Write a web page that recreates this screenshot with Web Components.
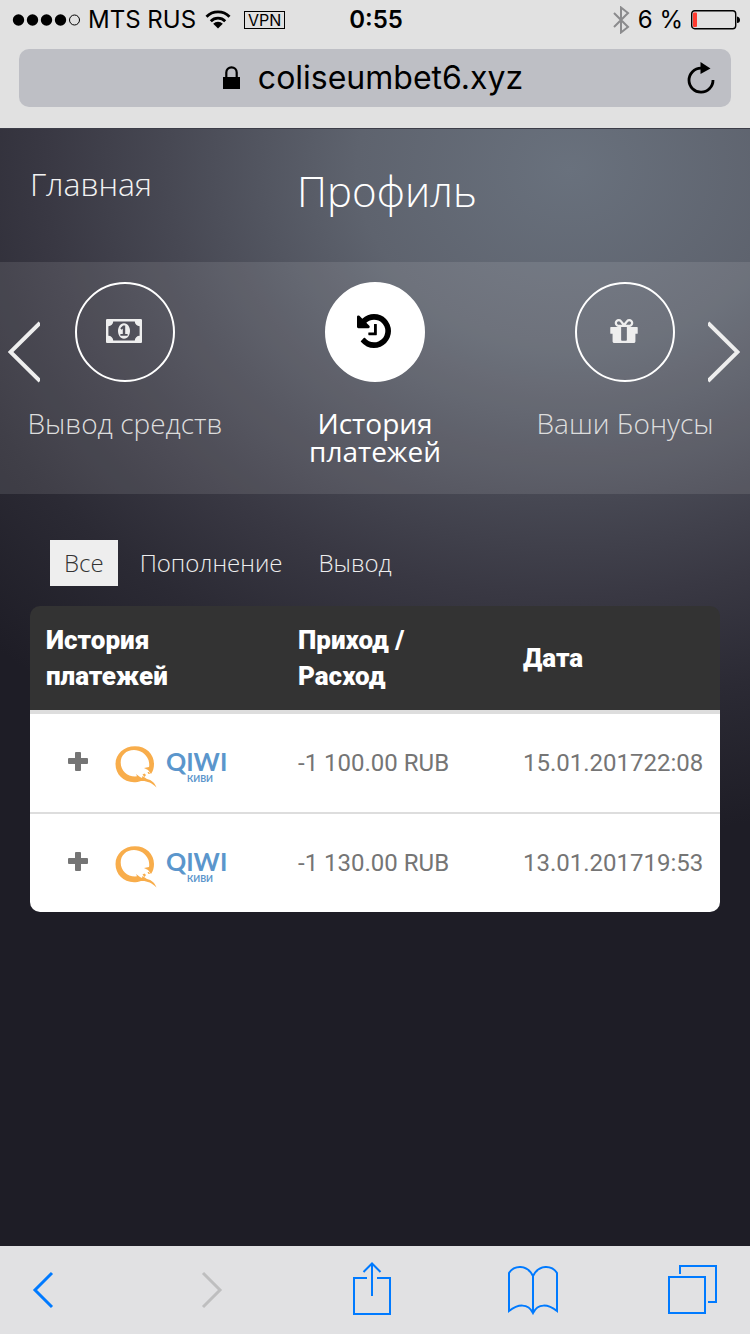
<!DOCTYPE html>
<html lang="ru">
<head>
<meta charset="utf-8">
<meta name="viewport" content="width=device-width, initial-scale=1">
<title>Профиль</title>
<style>
html { height: 100%; }
body { margin: 0; min-height: 100%; display: flex; flex-direction: column; font-family: "Open Sans", sans-serif; background: #1e1d26; }
profile-page { flex: 1; }
</style>
</head>
<body>
<browser-bar></browser-bar>
<profile-page>
  <page-header slot="header"></page-header>
  <section-carousel slot="sections">
    <section-item icon="money">Вывод средств</section-item>
    <section-item icon="history" active>История платежей</section-item>
    <section-item icon="gift">Ваши Бонусы</section-item>
  </section-carousel>
  <filter-tabs></filter-tabs>
  <payment-table></payment-table>
</profile-page>
<browser-toolbar></browser-toolbar>

<script>
function define(name, html) {
  const template = document.createElement('template');
  template.innerHTML = html;
  customElements.define(name, class extends HTMLElement {
    constructor() {
      super();
      this.attachShadow({ mode: 'open' }).append(template.content.cloneNode(true));
    }
  });
}

define('status-bar', `
<style>
:host { display: grid; grid-template-columns: 1fr auto 1fr; align-items: center; height: 40px; padding: 0 10px 0 12px; font: 24px/40px Inter, sans-serif; color: #000; }
div { display: flex; align-items: center; gap: 8px; }
.right { justify-content: flex-end; }
b { font-weight: 600; }
.vpn { border: 1px solid #000; font-size: 16px; line-height: 16px; padding: 0 3px; margin-left: 4px; }
svg { display: block; flex: none; }
</style>
<div>
  <svg width="68" height="12" viewBox="0 0 68 12"><circle cx="6.500" cy="6" r="5.700"/><circle cx="20.500" cy="6" r="5.700"/><circle cx="34.500" cy="6" r="5.700"/><circle cx="48.500" cy="6" r="5.700"/><circle cx="62.500" cy="6" r="5" fill="none" stroke="#000"/></svg>
  <span>MTS RUS</span>
  <svg width="28" height="20" viewBox="0 0 28 20"><g fill="none" stroke="#000" stroke-width="2.800"><path d="M2.500 6.800a16 16 0 0 1 23 0"/><path d="M6.800 11.200a10 10 0 0 1 14.400 0"/></g><path d="M14 18.500l-4.800-4.700a6.800 6.800 0 0 1 9.600 0z"/></svg>
  <span class="vpn">VPN</span>
</div>
<b>0:55</b>
<div class="right">
  <svg width="18" height="28" viewBox="0 0 18 28" fill="none" stroke="#8b8b8d" stroke-width="2"><path d="M2 7l14 14-7 5.500V1.500L16 7 2 21"/></svg>
  <span>6 %</span>
  <svg width="49" height="20" viewBox="0 0 49 20"><rect x=".700" y=".700" width="44" height="18" rx="3" fill="none" stroke="#000" stroke-width="1.400"/><rect x="2" y="2.500" width="4" height="14.500" rx="1" fill="#ff3b30"/><path d="M46 6.500q3 .500 3 3.500t-3 3z"/></svg>
</div>`);

define('browser-bar', `
<style>
:host { display: block; background: #e1e1e1; padding-bottom: 21px; }
.field { display: flex; align-items: center; margin: 9px 19px 0; height: 58px; border-radius: 10px; background: #bebfc5; }
button { border: 0; background: none; padding: 0; color: #000; display: flex; align-items: center; justify-content: center; }
.address { flex: 1; gap: 18px; padding-left: 56px; font: 32px/58px Inter, sans-serif; height: 58px; }
.reload { width: 60px; height: 58px; }
</style>
<status-bar></status-bar>
<div class="field">
  <button class="address"><svg width="17" height="24" viewBox="0 0 17 24"><path d="M3.300 12V6.500a5.200 5.200 0 0 1 10.400 0V12" fill="none" stroke="#000" stroke-width="2.200"/><path d="M0 11h17v12H0z"/></svg>coliseumbet6.xyz</button>
  <button class="reload" aria-label="Обновить"><svg width="28" height="32" viewBox="0 0 28 32"><path d="M26 18A12 12 0 1 1 14 6.200" fill="none" stroke="#000" stroke-width="2.800"/><path d="M13.500 0l10 6.500-10 5.500z"/></svg></button>
</div>`);

define('profile-page', `
<style>
:host { display: flex; flex-direction: column; box-sizing: border-box; border-top: 1px solid #3c3d48;
  background: radial-gradient(ellipse 760px 620px at 76% 40px, #69717d 0%, #5e636e 28%, #474853 53%, #393843 69%, #2b2a34 86%, #1e1d26 108%); color: #fff; }
main { display: flex; flex-direction: column; gap: 20px; padding: 46px 30px 30px; }
</style>
<slot name="header"></slot>
<slot name="sections"></slot>
<main><slot></slot></main>`);

define('page-header', `
<style>
:host { display: block; }
header { display: grid; grid-template-columns: 1fr auto 1fr; align-items: start; height: 133px; padding: 0 6px 0 30px; }
a { color: #f2f2f2; text-decoration: none; font-weight: 300; font-size: 32px; line-height: 110px; }
h1 { margin: 0; font-weight: 300; font-size: 42px; line-height: 124px; }
</style>
<header><a href="#home">Главная</a><h1>Профиль</h1></header>`);

define('section-carousel', `
<style>
:host { display: block; position: relative; background: rgba(255,255,255,.1); }
nav { display: grid; grid-template-columns: repeat(3, 1fr); min-height: 212px; padding-top: 20px; }
button { position: absolute; top: 59px; width: 32px; height: 62px; padding: 0; border: 0; background: none; }
.prev { left: 8px; }
.next { right: 10px; }
svg { display: block; fill: none; stroke: #eee; stroke-width: 4; }
</style>
<nav><slot></slot></nav>
<button class="prev" aria-label="Назад"><svg width="32" height="62" viewBox="0 0 32 62"><path d="M32 2L2.500 31 32 60"/></svg></button>
<button class="next" aria-label="Вперёд"><svg width="32" height="62" viewBox="0 0 32 62"><path d="M0 2l29.500 29L0 60"/></svg></button>`);

const icons = {
  money: ['0 256 1920 1280', 36, 24, 'M768 1152h384v-96h-128v-448h-114l-148 137 77 80q42-37 55-57h2v288h-128v96zm512-256q0 70-21 142t-59.5 134-101.5 101-138 39-138-39-101.5-101-59.5-134-21-142 21-142 59.5-134 101.5-101 138-39 138 39 101.5 101 59.5 134 21 142zm512 256v-512q-106 0-181-75t-75-181h-1152q0 106-75 181t-181 75v512q106 0 181 75t75 181h1152q0-106 75-181t181-75zm128-832v1152q0 26-19 45t-45 19h-1792q-26 0-45-19t-19-45v-1152q0-26 19-45t45-19h1792q26 0 45 19t19 45z'],
  history: ['0 128 1536 1536', 34, 34, 'M1536 896q0 156-61 298t-164 245-245 164-298 61q-172 0-327-72.5t-264-204.5q-7-10-6.500-22.500t8.500-20.500l137-138q10-9 25-9 16 2 23 12 73 95 179 147t225 52q104 0 198.500-40.500t163.500-109.500 109.500-163.500 40.500-198.500-40.500-198.500-109.500-163.500-163.500-109.500-198.500-40.500q-98 0-188 35.500t-160 101.500l137 138q31 30 14 69-17 40-59 40h-448q-26 0-45-19t-19-45v-448q0-42 40-59 39-17 69 14l130 129q107-101 244.500-156.500t284.500-55.500q156 0 298 61t245 164 164 245 61 298zm-640-288v448q0 14-9 23t-23 9h-320q-14 0-23-9t-9-23v-64q0-14 9-23t23-9h224v-352q0-14 9-23t23-9h64q14 0 23 9t9 23z'],
  gift: ['0 192 1536 1344', 28, 24, 'M928 1356v-56-468-192h-320v192 468 56q0 25 18 38.500t46 13.500h192q28 0 46-13.500t18-38.500zm-456-844h195l-126-161q-26-31-69-31-40 0-68 28t-28 68 28 68 68 28zm688-96q0-40-28-68t-68-28q-43 0-69 31l-125 161h194q40 0 68-28t28-68zm376 256v320q0 14-9 23t-23 9h-96v416q0 40-28 68t-68 28h-1088q-40 0-68-28t-28-68v-416h-96q-14 0-23-9t-9-23v-320q0-14 9-23t23-9h440q-93 0-158.500-65.500t-65.500-158.500 65.500-158.500 158.500-65.500q107 0 168 77l128 165 128-165q61-77 168-77 93 0 158.500 65.500t65.500 158.500-65.500 158.500-158.500 65.500h440q14 0 23 9t9 23z']
};

customElements.define('section-item', class extends HTMLElement {
  connectedCallback() {
    const [box, w, h, d] = icons[this.getAttribute('icon')];
    this.attachShadow({ mode: 'open' }).innerHTML = `
<style>
:host { display: block; }
a { display: flex; flex-direction: column; align-items: center; gap: 27px; color: #ddd; text-decoration: none; font-weight: 300; font-size: 28px; line-height: 28px; text-align: center; }
.disc { box-sizing: border-box; width: 100px; height: 100px; border: 2px solid #fff; border-radius: 50%; display: flex; align-items: center; justify-content: center; padding: 0 2px 2px 0; }
.label { max-width: 220px; }
svg { display: block; fill: #eee; }
:host([active]) a { color: #fff; font-weight: 400; }
:host([active]) .disc { background: #fff; }
:host([active]) .label { max-width: 180px; }
:host([active]) svg { fill: #000; }
</style>
<a href="#${this.getAttribute('icon')}"><span class="disc"><svg width="${w}" height="${h}" viewBox="${box}"><path d="${d}"/></svg></span><span class="label"><slot></slot></span></a>`;
  }
});

define('filter-tabs', `
<style>
:host { display: block; }
div { display: flex; gap: 8px; padding: 0 20px; }
button { border: 0; margin: 0; padding: 0 14px; height: 46px; background: none; color: #eee; font: 300 24px/46px "Open Sans", sans-serif; }
[aria-pressed=true] { background: #eee; color: #333; }
</style>
<div><button aria-pressed="true">Все</button><button aria-pressed="false">Пополнение</button><button aria-pressed="false">Вывод</button></div>`);

define('qiwi-logo', `
<style>
:host { display: block; }
svg { display: block; }
text { fill: #5b96cc; font-family: Lato, sans-serif; font-weight: 700; }
</style>
<svg width="120" height="52" viewBox="0 -8 120 52" role="img" aria-label="QIWI">
<path fill="#f8ad4b" fill-rule="evenodd" d="M20 1.300C31 1.300 39 9 39 19C39 23 38 26 36 29L33 25L29 23L34 22C34.500 20 34.200 18 33.500 15C31 8.500 25 5 19 5C11 5 5.700 10.500 5.700 17.500C5.700 25.500 12 31.500 20 31.500L22 31.200L21 29L25 32L27 33L27.500 31L32 34C36.500 35 40 38 41.500 42.500C37 37.500 31 35.500 26 36C24 37 21 37.200 19 37.200C8 37.200 .500 29 .500 19C.500 9 9 1.300 20 1.300z"/>
<path fill="#f8ad4b" d="M27.500 29.500l2-1 1.500 1.500-1.500 2zM32.500 27l1.500 0 1 2-1.500 0z"/>
<text x="51" y="26" font-size="25">QIWI</text>
<text x="72" y="37" font-size="9">КИВИ</text>
</svg>`);

define('payment-table', `
<style>
:host { display: block; border-radius: 10px; overflow: hidden; }
table { width: 100%; border-collapse: separate; border-spacing: 0; table-layout: fixed; font: 24px/36px Roboto, sans-serif; color: #757575; }
col:nth-child(2) { width: 225px; }
col:nth-child(3) { width: 213px; }
th { padding: 16px 40px 16px 16px; background: #333; color: #fff; text-align: left; font-size: 26px; font-weight: 900; }
td { padding: 0 0 0 16px; height: 98px; background: #fff; border-top: 2px solid #ddd; white-space: nowrap; }
tbody tr:first-child td { border-top-width: 4px; }
td:first-child { padding-left: 36px; }
.method { display: flex; align-items: center; gap: 25px; }
button { width: 24px; height: 24px; padding: 0; border: 0; background: none; }
button svg { display: block; margin: auto; }
</style>
<table>
<colgroup><col><col><col></colgroup>
<thead><tr><th scope="col">История платежей</th><th scope="col">Приход / Расход</th><th scope="col">Дата</th></tr></thead>
<tbody></tbody>
</table>`);

for (const host of document.querySelectorAll('payment-table')) {
  host.shadowRoot.querySelector('tbody').innerHTML = [
    ['-1 100.00 RUB', '15.01.2017', '22:08'],
    ['-1 130.00 RUB', '13.01.2017', '19:53']
  ].map(([sum, date, time]) => `<tr><td><div class="method"><button aria-label="Подробнее"><svg width="20" height="24" viewBox="0 0 20 24"><path d="M8 1h4q1 0 1 1v5h6q1 0 1 1v4q0 1-1 1h-6v6q0 1-1 1H8q-1 0-1-1v-6H1q-1 0-1-1V8q0-1 1-1h6V2q0-1 1-1z" fill="#757575"/></svg></button><qiwi-logo></qiwi-logo></div></td><td>${sum}</td><td>${date}${time}</td></tr>`).join('');
}

define('browser-toolbar', `
<style>
:host { display: block; }
nav { display: flex; align-items: center; justify-content: space-between; height: 88px; padding: 0 31px 0 17px; background: #e1e1e3; }
.history { display: flex; gap: 117px; }
button { display: flex; justify-content: center; width: 52px; padding: 0; border: 0; background: none; }
svg { display: block; flex: none; fill: none; stroke: #007aff; stroke-width: 2; }
.chev { stroke-width: 3; }
:disabled svg { stroke: #bebebf; }
</style>
<nav>
<div class="history">
<button aria-label="Назад"><svg class="chev" width="24" height="38" viewBox="0 0 24 38"><path d="M21 2L4 19l17 17"/></svg></button>
<button aria-label="Вперёд" disabled><svg class="chev" width="24" height="38" viewBox="0 0 24 38"><path d="M3 2l17 17L3 36"/></svg></button>
</div>
<button aria-label="Поделиться"><svg width="40" height="56" viewBox="0 0 40 56"><path d="M15 16H2v36h36V16H25M20 34V2M11.500 10L20 1.500 28.500 10"/></svg></button>
<button aria-label="Закладки"><svg width="52" height="50" viewBox="0 0 52 50"><path d="M26 48V11C20-1 7 0 2 8v38c9-7 19-8 24 2 5-10 15-9 24-2V8C45 0 32-1 26 11"/></svg></button>
<button aria-label="Вкладки"><svg width="50" height="52" viewBox="0 0 50 52"><path d="M1 13h36v36H1zM12 10V2h36v36h-8"/></svg></button>
</nav>`);
</script>
</body>
</html>
